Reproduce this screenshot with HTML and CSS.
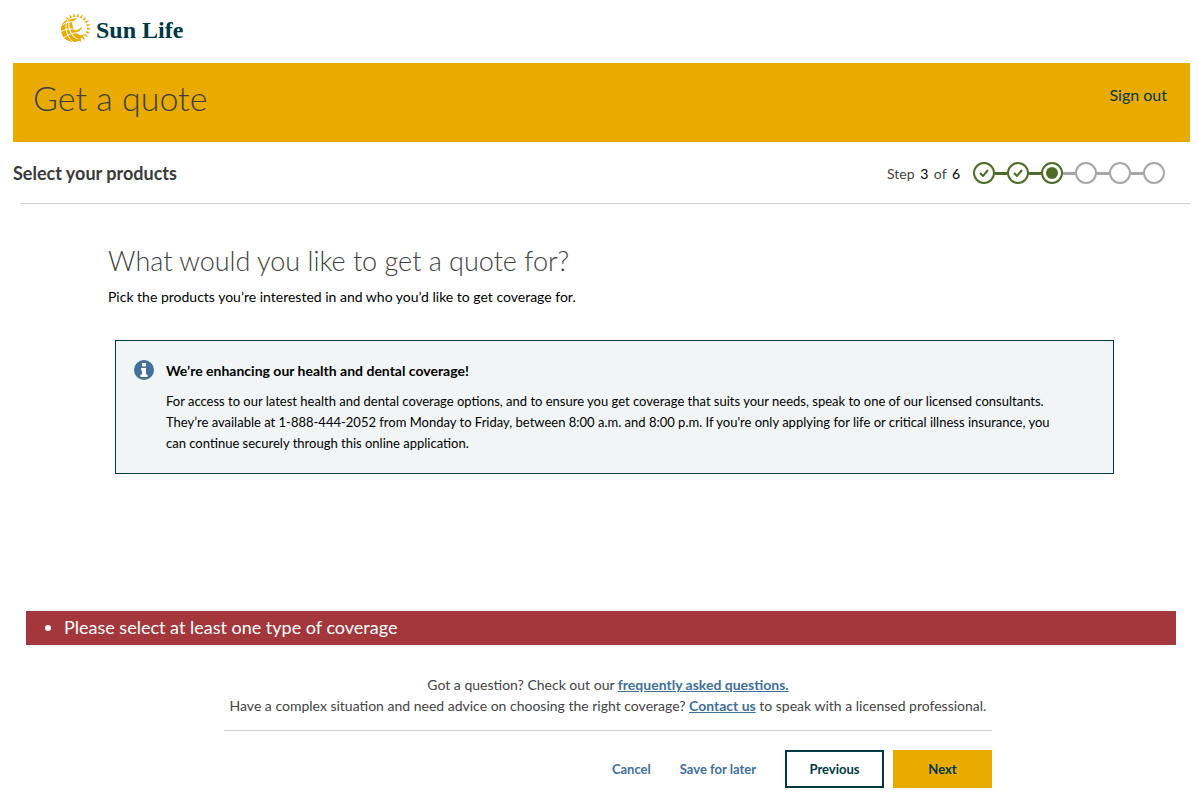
FILE: index.html
```html
<!DOCTYPE html>
<html lang="en">
<head>
  <meta charset="UTF-8">
  <meta name="viewport" content="width=device-width, initial-scale=1.0">
  <title>Get a quote | Sun Life</title>
  <link rel="stylesheet" href="styles.css">
</head>
<body>
  <header class="site-header">
    <a class="logo" href="#">
      <svg class="logo-mark" viewBox="0 0 32 32" aria-hidden="true">
        <defs>
          <path id="ray" d="M14.600 5L16 .5l1 4.500z"/>
        </defs>
        <!-- Rays -->
        <g fill="#eaab00">
          <use href="#ray" transform="rotate(-42 16 16)"/>
          <use href="#ray" transform="rotate(-25 16 16)"/>
          <use href="#ray" transform="rotate(-8 16 16)"/>
          <use href="#ray" transform="rotate(9 16 16)"/>
          <use href="#ray" transform="rotate(26 16 16)"/>
          <use href="#ray" transform="rotate(43 16 16)"/>
          <use href="#ray" transform="rotate(60 16 16)"/>
          <use href="#ray" transform="rotate(77 16 16)"/>
          <use href="#ray" transform="rotate(94 16 16)"/>
          <use href="#ray" transform="rotate(111 16 16)"/>
          <use href="#ray" transform="rotate(128 16 16)"/>
          <use href="#ray" transform="rotate(145 16 16)"/>
          <use href="#ray" transform="rotate(162 16 16)"/>
        </g>
        <!-- Globe -->
        <path fill="#eaab00" d="M10 6C4 8 .8 12.500 1 18c.3 7 5.500 12 12.500 12 3.500 0 6-1 8-2.500-4 .5-7.500-1.500-10-5C8 17.500 7 11 10 6z"/>
        <path fill="#eaab00" d="M9.500 8c2.500-1.500 5.500-1.800 8-1-2.500.5-4.500 2-5.500 4 .5 3 1.500 5.500 3 7.500 3-.5 5.500-2 7.500-4.500-1 3.500-3 5.500-6 6.500 1.500 1.500 3 2.500 4.500 3 1.500-.5 2.500-1 3.500-2-1 3-3 5-6 5.500-7-3-10-11-9-19z"/>
        <g fill="none" stroke="#fff">
          <path d="M2.500 13c4-3 8-3.500 10.500-3M1 19.500c5-2.500 9.500-3 14.500-2.500M4 25.500c5-3.500 9.500-5 15-4.500"/>
          <path d="M8 7c-4 7-2 17 5 23"/>
        </g>
      </svg>
      <span class="logo-text">Sun Life</span>
    </a>
  </header>

  <main class="page">
    <div class="banner">
      <h1>Get a quote</h1>
      <a class="sign-out" href="#">Sign out</a>
    </div>

    <!-- Progress -->
    <div class="step-bar">
      <h2>Select your products</h2>
      <div class="progress">
        <span class="step-label">Step <b>3</b> of <b>6</b></span>
        <ol class="steps">
          <li class="step done"><svg viewBox="0 0 10 8"><path d="M1 4l3 3 5-6"/></svg></li>
          <li class="step done"><svg viewBox="0 0 10 8"><path d="M1 4l3 3 5-6"/></svg></li>
          <li class="step current"></li>
          <li class="step"></li>
          <li class="step"></li>
          <li class="step"></li>
        </ol>
      </div>
    </div>

    <section class="content">
      <h3>What would you like to get a quote for?</h3>
      <p class="intro">Pick the products you’re interested in and who you’d like to get coverage for.</p>

      <div class="notice">
        <svg class="notice-icon" viewBox="0 0 20 20" aria-hidden="true">
          <circle cx="10" cy="10" r="10" fill="#41709c"/>
          <path fill="#fff" d="M8 3h4v3.500H8zM7 8h5v6.500h1.500V17h-7v-2.500H8v-4H7z"/>
        </svg>
        <div class="notice-body">
          <h4>We’re enhancing our health and dental coverage!</h4>
          <p>For access to our latest health and dental coverage options, and to ensure you get coverage that suits your needs, speak to one of our licensed consultants.<br>
          They’re available at 1-888-444-2052 from Monday to Friday, between 8:00 a.m. and 8:00 p.m. If you're only applying for life or critical illness insurance, you<br>
          can continue securely through this online application.</p>
        </div>
      </div>
    </section>

    <ul class="errors">
      <li>Please select at least one type of coverage</li>
    </ul>

    <footer class="form-footer">
      <div class="help">
        <p>Got a question? Check out our <a href="#">frequently asked questions.</a></p>
        <p>Have a complex situation and need advice on choosing the right coverage? <a href="#">Contact us</a> to speak with a licensed professional.</p>
      </div>
      <div class="actions">
        <button type="button" class="btn-link">Cancel</button>
        <button type="button" class="btn-link">Save for later</button>
        <button type="button" class="btn btn-outline">Previous</button>
        <button type="button" class="btn btn-primary">Next</button>
      </div>
    </footer>
  </main>
</body>
</html>
```
FILE: styles.css
```css
* {
  box-sizing: border-box;
}
body {
  margin: 0;
  background: #fff;
  color: #000;
  font-family: Lato, "Open Sans", sans-serif;
  font-size: 14px;
  line-height: 21px;
}
h1, h2, h3, h4, p, ul, ol {
  margin: 0;
  padding: 0;
}
.site-header {
  display: flex;
  padding: 12px 60px 19px;
}
.logo {
  display: flex;
  align-items: center;
  gap: 4px;
  height: 32px;
  color: #003946;
  text-decoration: none;
}
.logo-mark {
  width: 32px;
  height: 32px;
}
.logo-text {
  padding-top: 4px;
  font-family: "Liberation Serif", serif;
  font-size: 24px;
  font-weight: bold;
}
.page {
  margin: 0 9px 0 13px;
}
.banner {
  display: flex;
  justify-content: space-between;
  min-height: 79px;
  padding: 11px 23px 0 20px;
  background: #eaab00;
}
h1 {
  color: #3f3f3f;
  font-size: 34px;
  font-weight: 300;
  line-height: 48px;
}
.sign-out {
  padding-top: 10px;
  color: #003946;
  font-size: 16px;
  text-decoration: none;
}

/* Progress */
.step-bar {
  display: flex;
  align-items: center;
  justify-content: space-between;
  height: 62px;
  padding-right: 25px;
  background: linear-gradient(#d0d0d0, #d0d0d0) 7px 100% / 100% 1px no-repeat;
}
h2 {
  color: #3a3a3a;
  font-size: 18px;
  font-weight: bold;
}
.progress {
  display: flex;
  align-items: center;
  gap: 13px;
}
.step-label {
  color: #444;
  white-space: pre;
}
.step-label b {
  margin: 0 2px;
  color: #000;
  font-weight: normal;
}
.step-label b:last-child {
  margin-right: 0;
}
.steps {
  display: flex;
  gap: 12px;
  list-style: none;
}
.step {
  position: relative;
  display: flex;
  align-items: center;
  justify-content: center;
  width: 22px;
  height: 22px;
  border: 2px solid #a6a6a6;
  border-radius: 50%;
}
.step + .step::before {
  content: "";
  position: absolute;
  right: 20px;
  width: 12px;
  height: 3px;
  background: #a6a6a6;
}
.step.done,
.step.current {
  border-color: #4f6b28;
}
.step + .step.done::before,
.step + .step.current::before {
  background: #4f6b28;
}
.step svg {
  width: 10px;
  height: 8px;
  fill: none;
  stroke: #4f6b28;
  stroke-width: 2;
}
.step.current::after {
  content: "";
  width: 12px;
  height: 12px;
  border-radius: 50%;
  background: #4f6b28;
}

.content {
  padding: 39px 76px 0 95px;
}
h3 {
  color: #3f3f3f;
  font-size: 27px;
  font-weight: 300;
  line-height: 36px;
}
.intro {
  margin-top: 7px;
}
.notice {
  display: flex;
  gap: 12px;
  margin: 33px 0 0 7px;
  padding: 19px 12px 19px 18px;
  border: 1px solid #003946;
  background: #f1f5f6;
}
.notice-icon {
  flex: none;
  width: 20px;
  height: 20px;
}
.notice-body {
  font-size: 13px;
}
h4 {
  margin-bottom: 10px;
  font-size: 14px;
  font-weight: bold;
}
.errors {
  margin: 137px 14px 0 13px;
  padding: 3px 38px 5px;
  background: #a4373c;
  color: #fff;
  font-size: 18px;
  line-height: 26px;
}

/* Footer */
.form-footer {
  margin: 29px 198px 0 211px;
}
.help {
  padding-bottom: 14px;
  border-bottom: 1px solid #d0d0d0;
  color: #444;
  text-align: center;
}
.help a {
  color: #41709c;
  font-weight: bold;
}
.actions {
  display: flex;
  align-items: center;
  justify-content: flex-end;
  gap: 9px;
  padding: 19px 0;
}
.actions button {
  font-family: inherit;
  font-size: 13px;
  font-weight: bold;
  cursor: pointer;
}
.btn-link {
  margin-right: 20px;
  padding: 0;
  border: 0;
  background: none;
  color: #41709c;
}
.btn {
  width: 99px;
  height: 38px;
  border: 2px solid #003946;
  background: #fff;
  color: #003946;
}
.btn-primary {
  border-color: #eaab00;
  background: #eaab00;
}
```
